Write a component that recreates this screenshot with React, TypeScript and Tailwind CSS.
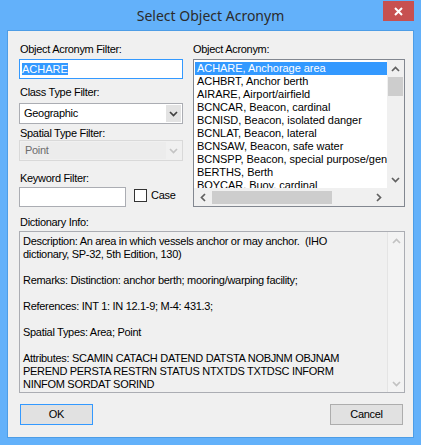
import React from "react";

const ChevUp = ({ c = "#606060" }: { c?: string }) => (
  <svg width="9" height="6" viewBox="0 0 9 6">
    <path d="M1 5 L4.5 1.5 L8 5" fill="none" stroke={c} strokeWidth="1.7" />
  </svg>
);
const ChevDown = ({ c = "#606060" }: { c?: string }) => (
  <svg width="9" height="6" viewBox="0 0 9 6">
    <path d="M1 1 L4.5 4.5 L8 1" fill="none" stroke={c} strokeWidth="1.7" />
  </svg>
);
const ChevLeft = ({ c = "#606060" }: { c?: string }) => (
  <svg width="6" height="9" viewBox="0 0 6 9">
    <path d="M5 1 L1.5 4.5 L5 8" fill="none" stroke={c} strokeWidth="1.7" />
  </svg>
);
const ChevRight = ({ c = "#606060" }: { c?: string }) => (
  <svg width="6" height="9" viewBox="0 0 6 9">
    <path d="M1 1 L4.5 4.5 L1 8" fill="none" stroke={c} strokeWidth="1.7" />
  </svg>
);

const items = [
  "ACHARE, Anchorage area",
  "ACHBRT, Anchor berth",
  "AIRARE, Airport/airfield",
  "BCNCAR, Beacon, cardinal",
  "BCNISD, Beacon, isolated danger",
  "BCNLAT, Beacon, lateral",
  "BCNSAW, Beacon, safe water",
  "BCNSPP, Beacon, special purpose/general",
  "BERTHS, Berth",
  "BOYCAR, Buoy, cardinal",
];

const dict = [
  "Description: An area in which vessels anchor or may anchor.  (IHO",
  "dictionary, SP-32, 5th Edition, 130)",
  "",
  "Remarks: Distinction: anchor berth; mooring/warping facility;",
  "",
  "References: INT 1: IN 12.1-9; M-4: 431.3;",
  "",
  "Spatial Types: Area; Point",
  "",
  "Attributes: SCAMIN CATACH DATEND DATSTA NOBJNM OBJNAM",
  "PEREND PERSTA RESTRN STATUS NTXTDS TXTDSC INFORM",
  "NINFOM SORDAT SORIND",
];

export default function App() {
  return (
    <div className="w-[421px] h-[445px] bg-[#63b1fa] flex flex-col font-['Liberation_Sans',Arial,sans-serif] text-[11px] text-black tracking-[-0.3px]">
      <div className="relative h-[30px] flex items-center justify-center">
        <span className="font-['Noto_Sans',sans-serif] text-[14px] tracking-normal text-[#2b2b2b] leading-[20px] mt-[1px]">
          Select Object Acronym
        </span>
        <div className="absolute right-[7px] top-[1px] w-[31px] h-[20px] bg-[#c75050] flex items-center justify-center">
          <svg width="9" height="9" viewBox="0 0 9 9">
            <path d="M1 1 L8 8 M8 1 L1 8" stroke="#fff" strokeWidth="2" />
          </svg>
        </div>
      </div>

      <div className="mx-[7px] mb-[7px] flex-1 border border-[#4d9de6] bg-[#f0f0f0] flex flex-col pl-[11px] pr-[8px]">
        <div className="flex flex-row gap-[10px] mt-[12px]">
          {/* left column */}
          <div className="w-[164px] flex flex-col">
            <div className="h-[13px] leading-[13px] pl-[1px]">Object Acronym Filter:</div>
            <div className="mt-[3px] h-[20px] border border-[#3399ff] bg-white flex items-center pl-[2px]">
              <span className="bg-[#3399ff] text-white leading-[12px] h-[12px] inline-block tracking-normal">ACHARE</span>
            </div>
            <div className="mt-[7px] h-[13px] leading-[13px] pl-[1px]">Class Type Filter:</div>
            <div className="mt-[4px] h-[21px] border border-[#abadb3] bg-white flex items-stretch">
              <div className="flex-1 flex items-center pl-[4px]">Geographic</div>
              <div className="w-[15px] my-[1px] mr-[1px] bg-[#e3e3e3] flex items-center justify-center">
                <ChevDown c="#404040" />
              </div>
            </div>
            <div className="mt-[3px] h-[13px] leading-[13px] pl-[1px]">Spatial Type Filter:</div>
            <div className="h-[21px] border border-[#d9d9d9] bg-[#f0f0f0] flex items-stretch">
              <div className="flex-1 flex items-center pl-[4px] text-[#6d6d6d] bg-[#ececec] my-[1px] ml-[1px]">Point</div>
              <div className="w-[15px] my-[1px] mr-[1px] bg-[#f0f0f0] flex items-center justify-center">
                <ChevDown c="#c4c4c4" />
              </div>
            </div>
            <div className="mt-[11px] h-[13px] leading-[13px] pl-[1px]">Keyword Filter:</div>
            <div className="mt-[2px] flex flex-row items-start">
              <div className="w-[107px] h-[20px] border border-[#abadb3] bg-white" />
              <div className="ml-[8px] mt-[2px] w-[13px] h-[13px] border border-[#333333] bg-white" />
              <div className="ml-[4px] mt-[2px] h-[13px] leading-[13px]">Case</div>
            </div>
          </div>

          {/* right column */}
          <div className="w-[212px] flex flex-col">
            <div className="h-[13px] leading-[13px]">Object Acronym:</div>
            <div className="mt-[3px] h-[148px] border border-[#828790] bg-white flex flex-col">
              <div className="flex-1 flex flex-row min-h-0">
                <div className="flex-1 overflow-hidden pt-[2px] pl-[1px] tracking-[-0.05px]">
                  {items.map((t, i) => (
                    <div
                      key={t}
                      className={
                        i === 0
                          ? "h-[13px] leading-[13px] whitespace-nowrap pl-[2px] bg-[#3399ff] text-white"
                          : "h-[13px] leading-[13px] whitespace-nowrap pl-[2px]"
                      }
                    >
                      {t}
                    </div>
                  ))}
                </div>
                <div className="w-[17px] bg-[#f0f0f0] flex flex-col">
                  <div className="h-[17px] flex items-center justify-center">
                    <ChevUp />
                  </div>
                  <div className="h-[19px] mx-[1px] bg-[#cdcdcd]" />
                  <div className="flex-1" />
                  <div className="h-[17px] flex items-center justify-center">
                    <ChevDown />
                  </div>
                </div>
              </div>
              <div className="h-[18px] shrink-0 flex flex-row bg-[#f0f0f0]">
                <div className="flex-1 flex flex-row">
                  <div className="w-[17px] flex items-center justify-center">
                    <ChevLeft />
                  </div>
                  <div className="w-[120px] mt-[3px] mb-[2px] ml-[1px] bg-[#cdcdcd]" />
                  <div className="flex-1" />
                  <div className="w-[17px] flex items-center justify-center">
                    <ChevRight />
                  </div>
                </div>
                <div className="w-[17px] bg-[#f0f0f0]" />
              </div>
            </div>
          </div>
        </div>

        <div className="mt-[9px] h-[13px] leading-[13px] pl-[1px]">Dictionary Info:</div>
        <div className="mt-[2px] h-[162px] border border-[#abadb3] bg-[#f0f0f0] flex flex-row">
          <div className="flex-1 pl-[3px] pt-[3px] overflow-hidden">
            {dict.map((l, i) => (
              <div key={i} className="h-[13px] leading-[13px] whitespace-pre">
                {l}
              </div>
            ))}
          </div>
          <div className="w-[17px] border-l border-[#e4e4e4] bg-[#f3f3f3] flex flex-col justify-between">
            <div className="h-[17px] flex items-center justify-center">
              <ChevUp c="#c2c2c2" />
            </div>
            <div className="h-[17px] flex items-center justify-center">
              <ChevDown c="#c2c2c2" />
            </div>
          </div>
        </div>

        <div className="mt-[11px] flex flex-row justify-between pl-[1px] pr-[2px]">
          <div className="w-[73px] h-[21px] border border-[#3399ff] bg-[#e1e1e1] flex items-center justify-center">
            OK
          </div>
          <div className="w-[73px] h-[21px] border border-[#adadad] bg-[#e1e1e1] flex items-center justify-center">
            Cancel
          </div>
        </div>
      </div>
    </div>
  );
}
